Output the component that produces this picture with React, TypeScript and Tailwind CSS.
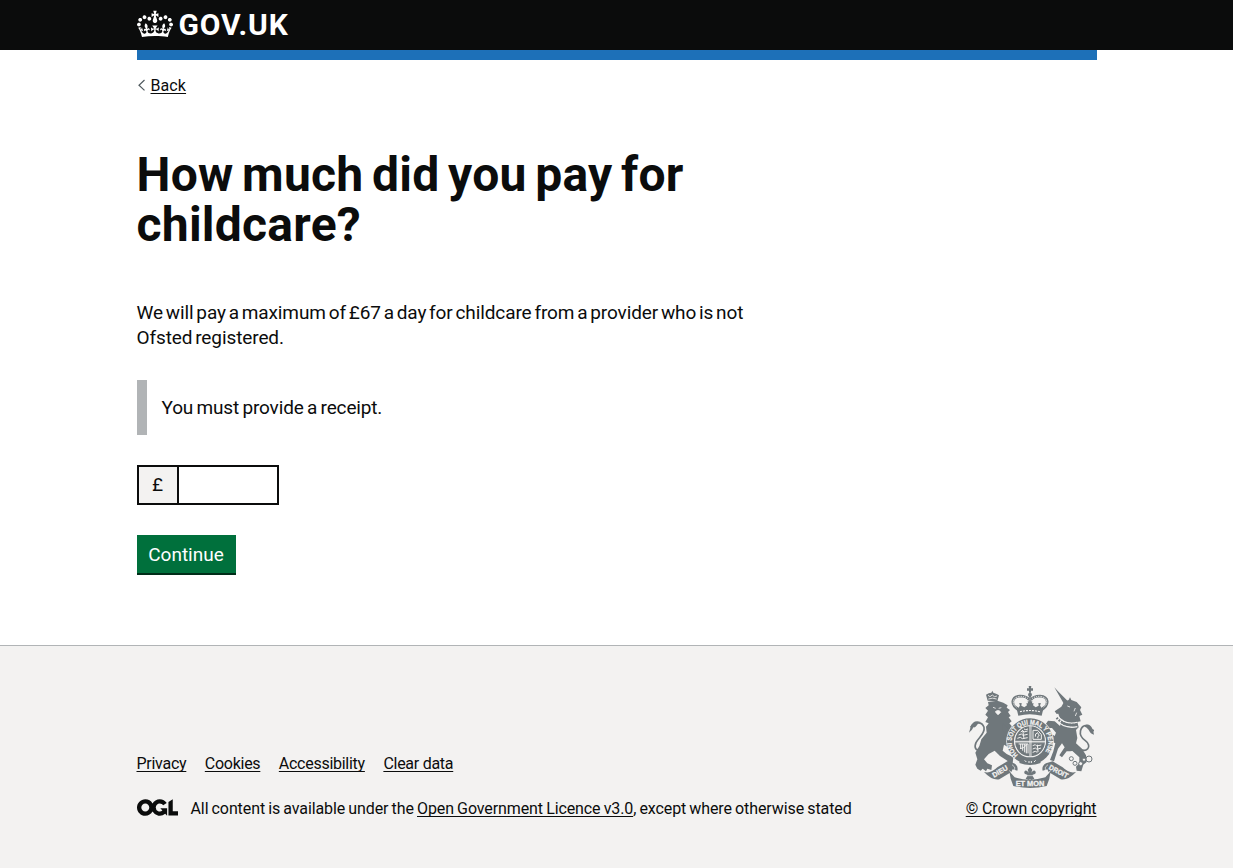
import type { ReactNode } from "react";

function Crown() {
  return (
    <svg viewBox="0 0 132 97" width="36" height="30" className="-mt-0.5 block shrink-0" aria-hidden="true">
      <path
        fill="currentColor"
        fillRule="evenodd"
        d="M25 30.2c3.5 1.5 7.7-.2 9.1-3.7 1.5-3.6-.2-7.8-3.9-9.2-3.6-1.4-7.6.3-9.1 3.9-1.4 3.5.3 7.5 3.9 9zM9 39.5c3.6 1.5 7.8-.2 9.2-3.7 1.5-3.6-.2-7.8-3.9-9.1-3.6-1.5-7.6.2-9.1 3.8-1.4 3.5.3 7.5 3.8 9zM4.4 57.2c3.5 1.5 7.7-.2 9.1-3.8 1.5-3.6-.2-7.7-3.9-9.1-3.5-1.5-7.6.3-9.1 3.8-1.4 3.5.3 7.6 3.9 9.1zm38.3-21.4c3.5 1.5 7.7-.2 9.1-3.8 1.5-3.6-.2-7.7-3.9-9.1-3.6-1.5-7.6.3-9.1 3.8-1.3 3.6.4 7.7 3.9 9.1zm64.4-5.6c-3.6 1.5-7.8-.2-9.1-3.7-1.5-3.6.2-7.8 3.8-9.2 3.6-1.4 7.7.3 9.2 3.9 1.3 3.5-.4 7.5-3.9 9zm15.9 9.3c-3.6 1.5-7.7-.2-9.1-3.7-1.5-3.6.2-7.8 3.7-9.1 3.6-1.5 7.7.2 9.2 3.8 1.5 3.5-.3 7.5-3.8 9zm4.7 17.7c-3.6 1.5-7.8-.2-9.2-3.8-1.5-3.6.2-7.7 3.9-9.1 3.6-1.5 7.7.3 9.2 3.8 1.3 3.5-.4 7.6-3.9 9.1zM89.3 35.8c-3.6 1.5-7.8-.2-9.2-3.8-1.4-3.6.2-7.7 3.9-9.1 3.6-1.5 7.7.3 9.2 3.8 1.4 3.6-.3 7.7-3.9 9.1zM69.7 17.7l8.9 4.7V9.3l-8.9 2.8c-.2-.3-.5-.6-.9-.9L72.4 0H59.6l3.5 11.2c-.3.3-.6.5-.9.9l-8.8-2.8v13.1l8.8-4.7c.3.3.6.7.9.9l-5 15.4v.1c-.2.8-.4 1.6-.4 2.4 0 4.1 3.1 7.5 7 8.1h.2c.3 0 .7.1 1 .1.4 0 .7 0 1-.1h.2c4-.6 7.1-4.1 7.1-8.1 0-.8-.1-1.7-.4-2.4V34l-5.1-15.4c.4-.2.7-.6 1-.9zM66 92.8c16.9 0 32.8 1.1 47.1 3.2 4-16.9 8.9-26.7 14-33.5l-9.6-3.4c1 4.9 1.1 7.2 0 10.2-1.5-1.4-3-4.3-4.2-8.7L108.6 76c2.8-2 5-3.2 7.5-3.3-4.4 9.4-10 11.9-13.6 11.2-4.3-.8-6.3-4.6-5.6-7.9 1-4.7 5.7-5.9 8-.5 4.3-8.7-3-11.4-7.6-8.8 7.1-7.2 7.9-13.5 2.1-21.1-8 6.1-8.1 12.3-4.5 20.8-4.7-5.4-12.1-2.5-9.5 6.2 3.4-5.2 7.9-2 7.2 3.1-.6 4.3-6.4 7.8-13.5 7.2-10.3-.9-10.9-8-11.2-13.8 2.5-.5 7.1 1.8 11 7.3L80.2 60c-4.1 4.4-8 5.3-12.3 5.4 1.4-4.4 8-11.6 8-11.6H55.5s6.4 7.2 7.9 11.6c-4.2-.1-8-1-12.3-5.4l1.4 16.4c3.9-5.5 8.5-7.7 10.9-7.3-.3 5.8-.9 12.8-11.1 13.8-7.2.6-12.9-2.9-13.5-7.2-.7-5 3.8-8.3 7.1-3.1 2.7-8.7-4.6-11.6-9.4-6.2 3.7-8.5 3.6-14.7-4.6-20.8-5.8 7.6-5 13.9 2.2 21.1-4.7-2.6-11.9.1-7.7 8.8 2.3-5.5 7.1-4.2 8.1.5.7 3.3-1.3 7.1-5.7 7.9-3.5.7-9-1.8-13.5-11.2 2.5.1 4.7 1.3 7.5 3.3l-4.7-15.4c-1.2 4.4-2.7 7.2-4.3 8.7-1.1-3-.9-5.3 0-10.2l-9.5 3.4c5 6.9 9.9 16.7 14 33.5 14.8-2.1 30.8-3.2 47.7-3.2z"
      />
    </svg>
  );
}

function OglLogo() {
  return (
    <svg viewBox="0 0 483.2 195.7" width="41" height="17" className="block shrink-0" aria-hidden="true">
      <path
        fill="currentColor"
        d="M421.5 142.8V.1l-50.7 32.3v161.1h112.4v-50.7zm-122.3-9.6A47.12 47.12 0 0 1 221 97.8c0-26 21.1-47.1 47.1-47.1 16.7 0 31.4 8.7 39.7 21.8l42.7-27.2A97.63 97.63 0 0 0 268.1 0c-36.5 0-68.3 20.1-85.1 49.7A98 98 0 0 0 97.8 0C43.9 0 0 43.9 0 97.8s43.9 97.8 97.8 97.8c36.5 0 68.3-20.1 85.1-49.7a97.76 97.76 0 0 0 149.6 25.4l19.4 22.2h3v-87.8h-80l24.3 27.5zM97.8 145c-26 0-47.1-21.1-47.1-47.1s21.1-47.1 47.1-47.1 47.1 21.1 47.1 47.1S123.8 145 97.8 145"
      />
    </svg>
  );
}

const G = "#6f777b";
const L = "#f3f2f1";

function Crest() {
  return (
    <svg viewBox="27 18 375 306" width="125" height="102" className="block" aria-hidden="true">
      {/* lion: tail, crown, body */}
      <path d="M66 206C46 216 42 202 48 188C56 172 76 160 72 142C66 122 42 126 32 142" fill="none" stroke={G} strokeWidth="5" />
      <path d="M27 158L32 140C36 126 48 120 62 126C50 130 50 144 40 142C36 150 34 152 27 158Z" fill={G} />
      <path d="M83 62L78 44L86 40L94 38L97 32L100 38L110 42L117 46L112 64Z" fill={G} />
      <path d="M84 46l6 4 7-5 6 5 8-2M85 57q13-5 25 0" fill="none" stroke={L} strokeWidth="2.5" />
      <path
        d="M84 66L112 62L130 68L143 76L140 83L150 90L144 96L152 108L146 112L155 124L148 130L158 142L150 158L148 178L158 196L148 204L132 194L128 212L140 222L160 232L158 250L146 256L142 242L120 228L104 212L86 222L72 238L82 250L96 256L94 270L82 266L78 274L68 266L62 272L52 266L46 254L52 238L46 218L58 198L64 178L80 158L78 140L86 130L76 126L84 112L76 104L84 92L76 84L86 76Z"
        fill={G}
      />
      <path d="M99 82l8 3M116 85l8-2M106 96l8 8 8-7-4-5-8 0z" fill={L} stroke={L} strokeWidth="2.5" />
      <path d="M128 130L160 160L164 172L150 168L128 154Z" fill={G} />

      {/* unicorn: horn, head, body, tail */}
      <path d="M283 22L294 34L324 64L312 72Z" fill={G} />
      <path
        d="M312 66L326 60L330 52L334 60L350 66L364 82L360 90L367 104L358 108L362 124L352 126L356 142L348 150L352 174L348 190L366 206L378 226L380 246L370 254L364 274L350 272L348 260L358 250L358 232L338 214L320 214L306 232L298 226L314 202L306 190L294 206L282 244L270 240L280 214L286 190L274 184L262 168L268 158L284 168L288 158L276 144L262 144L256 134L264 122L284 124L300 138L304 124L298 110L294 98L302 100L290 102L284 94L304 80Z"
        fill={G}
      />
      <path d="M292 108Q314 136 352 127M288 119Q312 148 352 140" fill="none" stroke={L} strokeWidth="4" />
      <path d="M290 113Q313 142 352 133" fill="none" stroke={G} strokeWidth="7" strokeDasharray="5 4" />
      <path d="M322 78l8 3M346 84l-4 10M350 98l-4 10" stroke={L} strokeWidth="2.5" />
      <path d="M350 202C382 224 398 198 376 182C350 164 362 136 380 136C392 138 390 152 402 152" fill="none" stroke={G} strokeWidth="5" />
      <path d="M402 164C386 160 390 146 374 140C382 126 398 134 402 164Z" fill={G} />
      <path d="M334 214l10 20 0 18" fill="none" stroke={L} strokeWidth="6" />
      {[[334, 236, 6], [345, 250, 6], [362, 251, 6], [372, 239, 5], [387, 237, 9]].map(([x, y, r]) => (
        <circle key={x} cx={x} cy={y} r={r} fill={L} stroke={G} strokeWidth="3" />
      ))}

      {/* royal crown */}
      <path d="M206 18h8l-1 7h6v7h-6v6h-6v-6h-6v-7h6z" fill={G} />
      <circle cx="210" cy="44" r="6" fill={G} />
      <path
        d="M176 90C150 74 154 50 180 48Q200 48 208 60M244 90C270 74 266 50 240 48Q220 48 212 60"
        fill="none"
        stroke={G}
        strokeWidth="8"
      />
      <path
        d="M176 88C152 72 156 52 180 49Q198 49 206 58M244 88C268 72 264 52 240 49Q222 49 214 58"
        fill="none"
        stroke={L}
        strokeWidth="3"
        strokeDasharray="3.5 3"
      />
      <path d="M210 48V82" stroke={G} strokeWidth="6" />
      <path d="M210 52V76" stroke={L} strokeWidth="2" strokeDasharray="3 3" />
      <path
        d="M168 78l8 5 4-7-3-6 8-1-1 8 9 5 8-6-2-6h5l-1-6h14l-1 6h5l-2 6 8 6 9-5-1-8 8 1-3 6 4 7 8-5-7 29q-36-9-70 0z"
        fill={G}
      />
      <path d="M180 95q30-7 60 0" fill="none" stroke={L} strokeWidth="3.5" strokeDasharray="6 3" />

      {/* garter and shield */}
      <circle cx="210" cy="184" r="71" fill={L} />
      <circle cx="210" cy="184" r="58" fill="none" stroke={G} strokeWidth="22" />
      <path id="garter" d="M174 226A55 52 0 1 1 246 226" fill="none" transform="translate(0 -1)" />
      <g fontFamily="Liberation Sans, sans-serif" fontWeight="700" fill={L} stroke={L} strokeWidth="0.7">
        <text fontSize="21">
          <textPath href="#garter" startOffset="0" textLength="244" lengthAdjust="spacingAndGlyphs">
            HONI SOIT QUI MAL Y PENSE
          </textPath>
        </text>
      </g>
      <circle cx="210" cy="184" r="48" fill={L} />
      <circle cx="210" cy="184" r="45" fill={G} />
      <path d="M210 138v92M164 184h92" stroke={L} strokeWidth="3" />
      <path d="M214 138v92M164 188h92" stroke={L} strokeWidth="1.5" />
      <g fill="none" stroke={L} strokeWidth="3">
        <path d="M182 156l6-4 4 4 11-3M176 165l8-3 5 4 14-3M172 175l9-3 6 4 16-3M192 147l5 2 7-2M188 150l4 26" />
        <path d="M218 197l8-3 4 4 14-3M218 207l8-3 5 4 12-4M218 217l8-3 6 3M232 194l2 22" />
        <path d="M219 151h14l11 13v14h-25zM226 170l1-8 6-4 2 5 3 2-5 6 1 4" />
        <path d="M176 192h28v28M182 192v14M188 192v20M194 192v25M199 192v28M180 206q12 0 20-12" />
      </g>
      <path d="M182 234q28 12 56 0l4 15q-32 12-64 0z" fill={G} />
      <path d="M194 241l5 5M207 243v6M214 243v6M222 246l5-5" stroke={L} strokeWidth="3" />

      {/* floral badge */}
      <path
        d="M210 260l7 9-3 9q8-11 13-3 2 7-9 9v4l5 8-9 4-4-2-4 2-9-4 5-8v-4q-11-2-9-9 5-8 13 3l-3-9z"
        fill={G}
      />
      <path d="M199 287h22" stroke={L} strokeWidth="2" />

      {/* motto scroll */}
      <path d="M72 276Q92 282 112 262L142 244L162 250Q176 258 172 272L158 268L154 276L118 298Q96 302 72 276Z" fill={G} />
      <path d="M348 276Q328 282 308 262L278 244L258 250Q244 258 248 272L262 268L266 276L302 298Q324 302 348 276Z" fill={G} />
      <path d="M148 274L164 292Q210 306 256 292L272 274L268 296L260 318Q210 330 160 318L152 296Z" fill={G} />
      <path d="M148 272L168 290M272 272L252 290" stroke={L} strokeWidth="2.5" />
      <path d="M156 254Q168 260 164 272M264 254Q252 260 256 272" fill="none" stroke={L} strokeWidth="2" />
      <g
        fontFamily="Liberation Sans, sans-serif"
        fontWeight="700"
        fill={L}
        stroke={L}
        strokeWidth="0.8"
        fontSize="21"
      >
        <text transform="translate(102 293) rotate(-30)" textLength="50" lengthAdjust="spacingAndGlyphs">
          DIEU
        </text>
        <text x="167" y="317" textLength="86" lengthAdjust="spacingAndGlyphs">
          ET MON
        </text>
        <text transform="translate(265 266) rotate(28)" textLength="62" lengthAdjust="spacingAndGlyphs">
          DROIT
        </text>
      </g>
    </svg>
  );
}

function FooterLink({ children }: { children: ReactNode }) {
  return (
    <a href="#" className="underline decoration-1 underline-offset-2 [text-decoration-skip-ink:none]">
      {children}
    </a>
  );
}

export default function App() {
  return (
    <div className="flex min-h-screen flex-col bg-white font-['Roboto','Liberation_Sans',sans-serif] text-[#0b0c0c] antialiased">
      <header className="bg-[#0b0c0c] text-white">
        <div className="mx-auto flex h-[50px] w-[960px] items-center gap-1.5">
          <Crown />
          <span className="text-[30px] leading-[30px] font-bold tracking-[0.9px]">GOV.UK</span>
        </div>
      </header>
      <div className="mx-auto h-2.5 w-[960px] bg-[#1d70b8]" />

      <div className="mx-auto w-[960px] flex-1">
        <a href="#" className="mt-[15px] flex h-5 w-fit items-center text-base leading-5">
          <svg viewBox="0 0 14 20" width="14" height="20" className="block" aria-hidden="true">
            <path d="M7.5 5L2 10.2L7.5 15.4" fill="none" stroke="#505a5f" strokeWidth="1.2" />
          </svg>
          <span className="mt-0.5 tracking-[0.1px] underline decoration-1 underline-offset-2">Back</span>
        </a>

        <main className="w-[630px] pt-[55px]">
          <h1 className="text-[48px] leading-[50px] font-bold tracking-[0.25px] [word-spacing:-3.6px]">
            How much did you pay for childcare?
          </h1>
          <p className="mt-[50px] text-[19px] leading-[25px] tracking-[-0.1px] [word-spacing:-1.8px]">
            We will pay a maximum of £67 a day for childcare from a provider who is not Ofsted registered.
          </p>
          <div className="mt-[30px] border-l-10 border-[#b1b4b6] p-[15px] text-[19px] leading-[25px] tracking-[-0.15px] [word-spacing:-1.2px]">
            You must provide a receipt.
          </div>
          <div className="mt-[30px] flex h-10 w-[142px] border-2 border-[#0b0c0c]">
            <div className="flex w-10 items-center justify-center border-r-2 border-[#0b0c0c] bg-[#f3f2f1] text-[19px]">£</div>
            <input aria-label="Amount" className="min-w-0 flex-1 px-1 text-[19px] outline-none" />
          </div>
          <button className="mt-[30px] block h-10 w-[99px] border-b-2 border-[#002d18] bg-[#00703c] pt-0.5 text-[19px] leading-[36px] text-white">
            Continue
          </button>
        </main>
      </div>

      <footer className="h-[223px] border-t border-[#b1b4b6] bg-[#f3f2f1] text-base leading-5">
        <div className="mx-auto flex h-full w-[960px] items-start justify-between pt-10">
          <div className="pt-[68px]">
            <div className="flex gap-[18.5px] tracking-[-0.27px]">
              <FooterLink>Privacy</FooterLink>
              <FooterLink>Cookies</FooterLink>
              <FooterLink>Accessibility</FooterLink>
              <FooterLink>Clear data</FooterLink>
            </div>
            <div className="mt-[25px] flex">
              <OglLogo />
              <p className="ml-[13px] tracking-[-0.1px] [word-spacing:-0.7px]">
                All content is available under the <FooterLink>Open Government Licence v3.0</FooterLink>, except where otherwise stated
              </p>
            </div>
          </div>
          <div className="flex flex-col items-end">
            <div className="mr-[3px]">
              <Crest />
            </div>
            <p className="mt-[11px] tracking-[-0.1px]">
              <FooterLink>© Crown copyright</FooterLink>
            </p>
          </div>
        </div>
      </footer>
    </div>
  );
}
